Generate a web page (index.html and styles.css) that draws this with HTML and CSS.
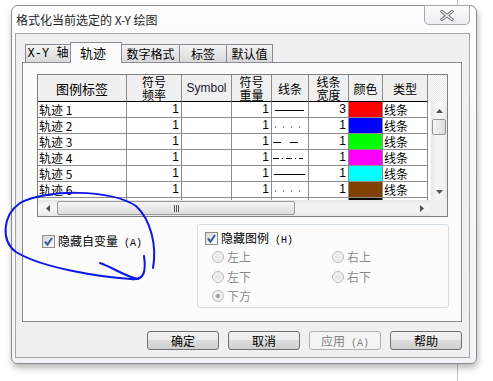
FILE: index.html
```html
<!DOCTYPE html>
<html lang="zh-CN">
<head>
    <meta charset="UTF-8">
    <title>格式化当前选定的 X-Y 绘图</title>
    <link rel="stylesheet" href="styles.css">
</head>
<body>
    <div class="bg-line"></div>

    <div class="window">
        <div class="titlebar">
            <span class="title">格式化当前选定的 X-Y 绘图</span>
            <div class="close">
                <svg width="14" height="11" viewBox="0 0 14 11">
                    <path d="M2 1.5 L12 9.5 M12 1.5 L2 9.5" stroke="#7c7c7c" stroke-width="3.2" stroke-linecap="square"/>
                    <path d="M2 1.5 L12 9.5 M12 1.5 L2 9.5" stroke="#f6f6f6" stroke-width="1.2" stroke-linecap="square"/>
                </svg>
            </div>
        </div>

        <div class="client">
            <div class="tabs">
                <div class="tab tab-xy">X-Y 轴</div>
                <div class="tab tab-trace selected">轨迹</div>
                <div class="tab tab-num">数字格式</div>
                <div class="tab tab-label">标签</div>
                <div class="tab tab-def">默认值</div>
            </div>

            <div class="panel">
                <div class="grid">
                    <div class="head">
                        <div class="hc big">图例标签</div>
                        <div class="hc"><span>符号</span><span>频率</span></div>
                        <div class="hc latin">Symbol</div>
                        <div class="hc"><span>符号</span><span>重量</span></div>
                        <div class="hc">线条</div>
                        <div class="hc"><span>线条</span><span>宽度</span></div>
                        <div class="hc">颜色</div>
                        <div class="hc">类型</div>
                        <div class="hc filler"></div>
                    </div>

                    <div class="body">
                        <div class="row">
                            <div class="first">轨迹 1</div><div class="num">1</div><div></div><div class="num">1</div>
                            <div class="line"><svg width="36" height="15"><line x1="3" y1="8.5" x2="32" y2="8.5" stroke="#000"/></svg></div>
                            <div class="num">3</div><div class="color" style="background:#ff0000"></div><div>线条</div>
                        </div>
                        <div class="row">
                            <div>轨迹 2</div><div class="num">1</div><div></div><div class="num">1</div>
                            <div class="line"><svg width="36" height="15"><line x1="3" y1="9" x2="32" y2="9" stroke="#000" stroke-dasharray="1 7"/></svg></div>
                            <div class="num">1</div><div class="color" style="background:#0000ff"></div><div>线条</div>
                        </div>
                        <div class="row">
                            <div>轨迹 3</div><div class="num">1</div><div></div><div class="num">1</div>
                            <div class="line"><svg width="36" height="15"><line x1="1" y1="8.5" x2="27" y2="8.5" stroke="#000" stroke-dasharray="8 9"/></svg></div>
                            <div class="num">1</div><div class="color" style="background:#00ff00"></div><div>线条</div>
                        </div>
                        <div class="row">
                            <div>轨迹 4</div><div class="num">1</div><div></div><div class="num">1</div>
                            <div class="line"><svg width="36" height="15"><line x1="1" y1="8.5" x2="31" y2="8.5" stroke="#000" stroke-dasharray="6 3 1 3"/></svg></div>
                            <div class="num">1</div><div class="color" style="background:#ff00ff"></div><div>线条</div>
                        </div>
                        <div class="row">
                            <div>轨迹 5</div><div class="num">1</div><div></div><div class="num">1</div>
                            <div class="line"><svg width="36" height="15"><line x1="2" y1="8.5" x2="33" y2="8.5" stroke="#000"/></svg></div>
                            <div class="num">1</div><div class="color" style="background:#00ffff"></div><div>线条</div>
                        </div>
                        <div class="row">
                            <div>轨迹 6</div><div class="num">1</div><div></div><div class="num">1</div>
                            <div class="line"><svg width="36" height="15"><line x1="3" y1="9" x2="32" y2="9" stroke="#000" stroke-dasharray="1 7"/></svg></div>
                            <div class="num">1</div><div class="color" style="background:#804000"></div><div>线条</div>
                        </div>
                        <div class="row">
                            <div></div><div></div><div></div><div></div>
                            <div></div>
                            <div></div><div class="color" style="background:#000000"></div><div></div>
                        </div>
                    </div>

                    <div class="vscroll">
                        <div class="sb-btn"><svg width="7" height="4"><path d="M0 4 L3.5 0 L7 4 Z" fill="#505050"/></svg></div>
                        <div class="thumb v"></div>
                        <div class="track"></div>
                        <div class="sb-btn"><svg width="7" height="4"><path d="M0 0 L3.5 4 L7 0 Z" fill="#505050"/></svg></div>
                    </div>

                    <div class="hscroll">
                        <div class="sb-btn h"><svg width="4" height="7"><path d="M4 0 L0 3.5 L4 7 Z" fill="#505050"/></svg></div>
                        <div class="thumb h"><span class="grip"></span><span class="grip"></span><span class="grip"></span></div>
                        <div class="track"></div>
                        <div class="sb-btn h"><svg width="4" height="7"><path d="M0 0 L4 3.5 L0 7 Z" fill="#505050"/></svg></div>
                    </div>

                    <div class="corner"></div>
                </div>

                <div class="options">
                    <div class="left-opt">
                        <label class="check">
                            <span class="box"><svg width="11" height="11"><path d="M2 5.5 L4.5 8.5 L9 2" stroke="#3d5a9c" stroke-width="2" fill="none"/></svg></span>
                            <span>隐藏自变量<span class="key"> (A)</span></span>
                        </label>
                    </div>

                    <div class="group">
                        <label class="check">
                            <span class="box"><svg width="11" height="11"><path d="M2 5.5 L4.5 8.5 L9 2" stroke="#3d5a9c" stroke-width="2" fill="none"/></svg></span>
                            <span>隐藏图例<span class="key"> (H)</span></span>
                        </label>
                        <div class="radios">
                            <div class="radio"><span class="dot"></span>左上</div>
                            <div class="radio"><span class="dot"></span>右上</div>
                            <div class="radio"><span class="dot"></span>左下</div>
                            <div class="radio"><span class="dot"></span>右下</div>
                            <div class="radio"><span class="dot on"></span>下方</div>
                        </div>
                    </div>
                </div>
            </div>

            <div class="buttons">
                <div class="btn">确定</div>
                <div class="btn">取消</div>
                <div class="btn disabled">应用<span class="key"> (A)</span></div>
                <div class="btn">帮助</div>
            </div>
        </div>
    </div>

    <!-- hand-drawn marker around the checkbox -->
    <svg class="scribble" width="493" height="381" viewBox="0 0 493 381">
        <path d="M144 256 C146 270 145 281 131 279 C100 277 42 268 16 252 C1 241 2 216 20 203 C45 189 110 189 136 206 C151 220 157 246 153 268"
              fill="none" stroke="#0c16e6" stroke-width="2" stroke-linecap="round"/>
        <path d="M100 263 C114 268 124 276 138 279" fill="none" stroke="#0c16e6" stroke-width="2" stroke-linecap="round"/>
    </svg>
</body>
</html>
```

FILE: styles.css
```css
/* General */
* {
    box-sizing: border-box;
}

body {
    margin: 0;
    width: 493px;
    height: 381px;
    overflow: hidden;
    position: relative;
    padding: 5px 0 0 11px;
    background-color: #fff;
    font-family: "Noto Sans CJK SC", sans-serif;
    font-size: 12px;
    color: #000;
}

.bg-line {
    position: absolute;
    left: 457px;
    top: 0;
    width: 1px;
    height: 381px;
    background-color: #c4c4c4;
}

/* Window frame */
.window {
    position: relative;
    width: 466px;
    height: 359px;
    border: 1px solid #8a8a8a;
    border-radius: 7px 7px 6px 6px;
    background: linear-gradient(#fdfdfd, #f2f4f7);
    box-shadow: 1px 4px 6px rgba(0, 0, 0, 0.28);
}

.titlebar {
    height: 27px;
    display: flex;
    align-items: center;
    padding-left: 4px;
}

.title {
    line-height: 14px;
    color: #1e1e1e;
}

.close {
    margin-left: auto;
    align-self: flex-start;
    margin-top: -1px;
    margin-right: 6px;
    width: 46px;
    height: 20px;
    border: 1px solid #a4a9ae;
    border-radius: 0 0 5px 5px;
    background: linear-gradient(#fbfbfb, #eceef1);
    display: flex;
    align-items: center;
    justify-content: center;
}

.client {
    margin-left: 3px;
    width: 455px;
    height: 325px;
    border: 1px solid #a5a5a5;
    background-color: #f0f0f0;
}

/* Tabs */
.tabs {
    display: flex;
    align-items: flex-end;
    height: 28px;
    padding-left: 9px;
}

.tab {
    height: 18px;
    margin-right: -1px;
    border: 1px solid #898c95;
    border-bottom: none;
    background: linear-gradient(#f3f3f3, #e6e6e6 50%, #d8d8d8);
    display: flex;
    align-items: center;
    justify-content: center;
    line-height: 14px;
    padding-top: 1px;
}

.tab-xy { width: 46px; font-family: "Liberation Mono", "Noto Sans CJK SC", monospace; }
.tab-trace { width: 52px; }
.tab-num { width: 59px; }
.tab-label { width: 48px; }
.tab-def { width: 47px; }

.tab.selected {
    position: relative;
    z-index: 1;
    height: 21px;
    margin-bottom: -1px;
    background: #fcfcfc;
    font-size: 13px;
    padding-top: 0;
    padding-right: 6px;
}

.panel {
    margin-left: 6px;
    width: 440px;
    height: 260px;
    border: 1px solid #898c95;
    background-color: #fcfcfc;
    padding: 11px 0 0 14px;
}

/* Trace grid */
.grid {
    width: 411px;
    height: 143px;
    border: 1px solid #7f7f7f;
    display: grid;
    grid-template-columns: 393px 16px;
    grid-template-rows: 27px 98px 16px;
    background-color: #fff;
}

.head {
    grid-column: 1 / 3;
    display: grid;
    grid-template-columns: 89px 55px 50px 40px 37px 40px 34px 45px 1fr;
}

.hc {
    border-right: 1px solid #8c8c8c;
    border-bottom: 1px solid #000;
    background-color: #f0f0f0;
    display: flex;
    flex-direction: column;
    align-items: center;
    justify-content: center;
    text-align: center;
    line-height: 13px;
}

.hc span {
    display: block;
    height: 13px;
    line-height: 13px;
}

.hc.big {
    font-size: 13px;
}

.hc.latin {
    font-family: "Liberation Sans", sans-serif;
    color: #1a1a2a;
}

.hc.filler {
    border: none;
    background: repeating-conic-gradient(#e9e9e9 0 25%, #fafafa 0 50%) 0 0 / 2px 2px;
}

.body {
    grid-column: 1;
    grid-row: 2;
    overflow: hidden;
}

.row {
    display: grid;
    grid-template-columns: 89px 55px 50px 40px 37px 40px 34px 45px;
    height: 16px;
}

.row > div {
    border-right: 1px solid #8c8c8c;
    border-bottom: 1px solid #8c8c8c;
    line-height: 15px;
    white-space: nowrap;
    overflow: hidden;
    padding: 0 1px;
}

.row > .first {
    border-left: 1px solid #000;
    margin-left: -1px;
}

.row > .num {
    text-align: right;
    padding-right: 2px;
    font-family: "Liberation Sans", sans-serif;
}

.row > .line,
.row > .color {
    padding: 0;
}

.line svg {
    display: block;
}

/* Scrollbars */
.vscroll {
    grid-column: 2;
    grid-row: 2;
    display: flex;
    flex-direction: column;
    background: linear-gradient(90deg, #e6e6e6, #f4f4f4 30%, #f4f4f4 70%, #e6e6e6);
}

.hscroll {
    grid-column: 1;
    grid-row: 3;
    display: flex;
    background: linear-gradient(#e6e6e6, #f4f4f4 30%, #f4f4f4 70%, #e6e6e6);
}

.sb-btn {
    height: 17px;
    display: flex;
    align-items: center;
    justify-content: center;
}

.sb-btn.h {
    height: auto;
    width: 19px;
}

.track {
    flex: 1;
}

.thumb {
    border: 1px solid #979797;
    border-radius: 2px;
}

.thumb.v {
    height: 16px;
    margin: 0 1px;
    background: linear-gradient(90deg, #f5f5f5, #dcdcdc);
}

.thumb.h {
    width: 238px;
    margin: 1px 0;
    background: linear-gradient(#f5f5f5, #dcdcdc);
    display: flex;
    align-items: center;
    justify-content: center;
    gap: 1px;
}

.grip {
    width: 1px;
    height: 7px;
    background-color: #555;
}

.corner {
    grid-column: 2;
    grid-row: 3;
    background-color: #f0f0f0;
}

/* Options under the grid */
.options {
    display: flex;
    margin-top: 7px;
    padding-left: 5px;
}

.left-opt {
    width: 155px;
    padding-top: 11px;
}

.check {
    display: flex;
    align-items: center;
    gap: 3px;
    height: 13px;
    line-height: 13px;
}

.box {
    width: 13px;
    height: 13px;
    border: 1px solid #8e8f8f;
    background: linear-gradient(135deg, #d8d8d8, #fbfbfb);
    display: flex;
    align-items: center;
    justify-content: center;
}

.box svg {
    display: block;
}

.key {
    font-size: 10px;
    font-family: "Liberation Mono", monospace;
}

.group {
    width: 252px;
    height: 84px;
    border: 1px solid #d5dfe5;
    border-radius: 3px;
    padding: 7px 0 0 7px;
}

.radios {
    display: grid;
    grid-template-columns: 120px 120px;
    grid-auto-rows: 12px;
    row-gap: 7.5px;
    margin: 6px 0 0 7px;
}

.radio {
    display: flex;
    align-items: center;
    gap: 3px;
    line-height: 12px;
    color: #8d8d8d;
}

.dot {
    width: 12px;
    height: 12px;
    border-radius: 50%;
    border: 1px solid #bcbcbc;
    background: radial-gradient(#e6e6e6, #f7f7f7);
    display: flex;
    align-items: center;
    justify-content: center;
}

.dot.on::after {
    content: "";
    width: 4px;
    height: 4px;
    border-radius: 50%;
    background-color: #9b9b9b;
}

/* Dialog buttons */
.buttons {
    display: flex;
    justify-content: flex-end;
    gap: 9px;
    margin-top: 9px;
    padding-right: 7px;
}

.btn {
    width: 72px;
    height: 19px;
    border: 1px solid #707070;
    border-radius: 3px;
    background: linear-gradient(#f2f2f2, #ebebeb 45%, #dddddd 50%, #cfcfcf);
    text-align: center;
    line-height: 17px;
}

.btn.disabled {
    border-color: #adb2b5;
    background: #f4f4f4;
    color: #838383;
}

/* Annotation overlay */
.scribble {
    position: absolute;
    left: 0;
    top: 0;
    pointer-events: none;
}
```
